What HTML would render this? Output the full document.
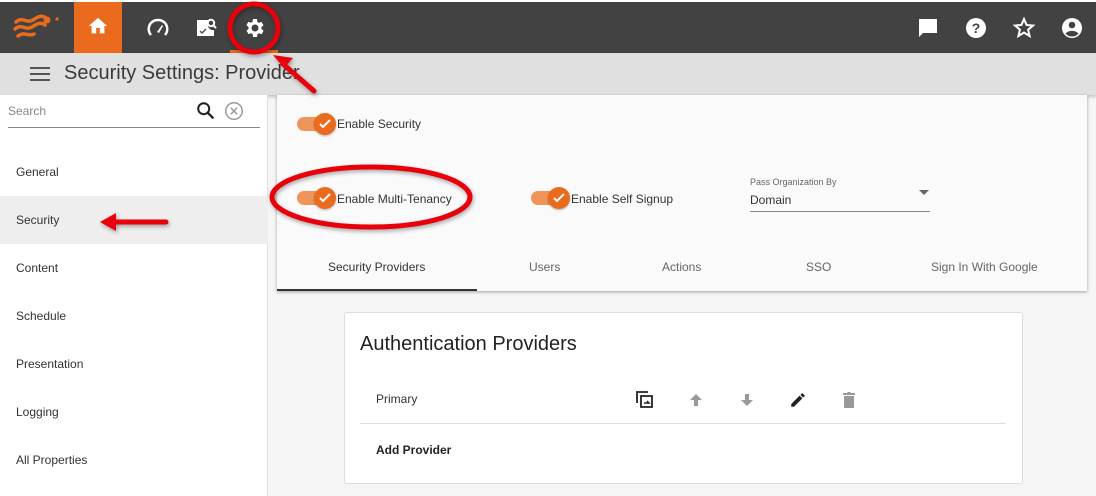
<!DOCTYPE html>
<html><head><style>
*{margin:0;padding:0;box-sizing:border-box}
body{width:1096px;height:496px;overflow:hidden;background:#f5f5f5;font-family:"Liberation Sans",sans-serif;position:relative;color:#333}
.a{position:absolute}
.top{left:0;top:0;width:1096px;height:53px;background:#424242;border-top:2px solid #fff}
.sub{left:0;top:53px;width:1096px;height:42px;background:#e0e0e0;box-shadow:0 2px 3px rgba(0,0,0,.2)}
.side{left:0;top:95px;width:268px;height:401px;background:#fff;border-right:1px solid #e0e0e0}
.nav{position:absolute;left:16px;font-size:12px;color:#333}
.card{left:277px;top:95px;width:810px;height:196px;background:#fafafa;box-shadow:0 1px 3px rgba(0,0,0,.35)}
.tog{position:absolute;width:36px;height:14px;border-radius:7px;background:#f0955a}
.tog:after{content:"";position:absolute;left:17px;top:-4px;width:22px;height:22px;border-radius:50%;background:#ea6a1e;box-shadow:0 1px 2px rgba(0,0,0,.3)}
.tog svg{position:absolute;left:21px;top:0;z-index:2}
.lbl{position:absolute;font-size:12px;color:#333}
.tab{position:absolute;top:260px;font-size:12px;color:#666}
.auth{left:344px;top:312px;width:679px;height:172px;background:#fff;border:1px solid #ddd;border-radius:3px}
</style></head><body>
<div class="a top"></div>
<svg class="a" style="left:12px;top:10px" width="50" height="32" viewBox="0 0 50 32"><g fill="none" stroke="#ea6a1e" stroke-width="3.5" stroke-linecap="round"><path d="M4 12c6-6 11 2 17-2s9-5 13-2"/><path d="M3 19c6-6 11 2 17-2s9-5 13-2"/><path d="M6 26c6-5 10 1 16-2"/></g><circle cx="45" cy="9" r="1.6" fill="#ea6a1e"/><circle cx="35" cy="10" r="3.5" fill="#ea6a1e"/></svg>
<div class="a" style="left:74px;top:2px;width:48px;height:51px;background:#ea6a1e"></div>
<svg class="a" style="left:87px;top:15px" width="22" height="22" viewBox="0 0 24 24"><path fill="#fff" d="M10 20v-6h4v6h5v-8h3L12 3 2 12h3v8z"/></svg>
<svg class="a" style="left:146px;top:16px" width="24" height="24" viewBox="0 0 24 24"><path fill="none" stroke="#fff" stroke-width="2.4" d="M5 19A9 9 0 0 1 12 4a9 9 0 0 1 7 15"/><path fill="#fff" d="M11 16l5-7 1 1-4 7z"/></svg>
<svg class="a" style="left:194px;top:15px" width="24" height="24" viewBox="0 0 24 24"><path fill="#fff" d="M3 5h11v4a5 5 0 0 0 6 6v6H3z"/><circle cx="17" cy="8" r="3.2" fill="none" stroke="#fff" stroke-width="2"/><path stroke="#fff" stroke-width="2" d="M19 10l3 3"/><path fill="none" stroke="#555" stroke-width="1.5" d="M6 16l2 2 4-4"/></svg>
<svg class="a" style="left:242px;top:16px" width="24" height="24" viewBox="0 0 24 24"><path fill="#fff" d="M19.4 13a7.5 7.5 0 0 0 0-2l2.1-1.6-2-3.5-2.5 1a7 7 0 0 0-1.7-1L15 3h-4l-.4 2.7a7 7 0 0 0-1.7 1l-2.5-1-2 3.5L6.6 11a7.5 7.5 0 0 0 0 2l-2.1 1.6 2 3.5 2.5-1a7 7 0 0 0 1.7 1L11 21h4l.4-2.7a7 7 0 0 0 1.7-1l2.5 1 2-3.5zM13 15.5a3.5 3.5 0 1 1 0-7 3.5 3.5 0 0 1 0 7z"/></svg>
<div class="a" style="left:230px;top:50px;width:48px;height:3px;background:#ea6a1e"></div>
<svg class="a" style="left:916px;top:16px" width="24" height="24" viewBox="0 0 24 24"><path fill="#fff" d="M3 3h18v14H7l-4 4z"/></svg>
<svg class="a" style="left:964px;top:16px" width="24" height="24" viewBox="0 0 24 24"><circle cx="12" cy="12" r="10" fill="#fff"/><text x="12" y="17" font-size="14" font-weight="bold" text-anchor="middle" fill="#424242" font-family="Liberation Sans">?</text></svg>
<svg class="a" style="left:1012px;top:16px" width="24" height="24" viewBox="0 0 24 24"><path fill="none" stroke="#fff" stroke-width="2" d="M12 3l2.6 6 6.4.5-4.9 4.2 1.5 6.3L12 16.6 6.4 20l1.5-6.3L3 9.5 9.4 9z"/></svg>
<svg class="a" style="left:1060px;top:16px" width="24" height="24" viewBox="0 0 24 24"><circle cx="12" cy="12" r="10" fill="#fff"/><circle cx="12" cy="9" r="3.3" fill="#424242"/><path fill="#424242" d="M5.5 17.5c3-3.5 10-3.5 13 0a8.5 8.5 0 0 1-13 0z"/></svg>
<div class="a sub"></div>
<svg class="a" style="left:30px;top:66px" width="20" height="16"><path stroke="#555" stroke-width="2" d="M0 2h20M0 8h20M0 14h20"/></svg>
<div class="a" style="left:64px;top:62px;font-size:20px;color:#3a3a3a">Security Settings: Provider</div>
<div class="a side"></div>
<div class="a" style="left:8px;top:104px;font-size:12px;color:#888">Search</div>
<svg class="a" style="left:195px;top:100px" width="22" height="22" viewBox="0 0 24 24"><circle cx="9.5" cy="9.5" r="6" fill="none" stroke="#222" stroke-width="2.2"/><path stroke="#222" stroke-width="2.5" d="M14 14l6 6"/></svg>
<svg class="a" style="left:223px;top:100px" width="22" height="22" viewBox="0 0 24 24"><circle cx="12" cy="12" r="9" fill="none" stroke="#999" stroke-width="1.6"/><path stroke="#999" stroke-width="1.6" d="M8.5 8.5l7 7M15.5 8.5l-7 7"/></svg>
<div class="a" style="left:8px;top:127px;width:252px;height:1px;background:#888"></div>
<div class="a" style="left:0;top:196px;width:268px;height:48px;background:#eee"></div>
<div class="nav" style="top:165px">General</div>
<div class="nav" style="top:213px">Security</div>
<div class="nav" style="top:261px">Content</div>
<div class="nav" style="top:309px">Schedule</div>
<div class="nav" style="top:357px">Presentation</div>
<div class="nav" style="top:405px">Logging</div>
<div class="nav" style="top:453px">All Properties</div>
<div class="a card"></div>
<div class="tog" style="left:297px;top:117px"><svg width="14" height="14" viewBox="0 0 14 14"><path fill="none" stroke="#fff" stroke-width="2" d="M2 7l3 3 7-7"/></svg></div>
<div class="lbl" style="left:337px;top:117px">Enable Security</div>
<div class="tog" style="left:297px;top:191px"><svg width="14" height="14" viewBox="0 0 14 14"><path fill="none" stroke="#fff" stroke-width="2" d="M2 7l3 3 7-7"/></svg></div>
<div class="lbl" style="left:337px;top:192px">Enable Multi-Tenancy</div>
<div class="tog" style="left:531px;top:191px"><svg width="14" height="14" viewBox="0 0 14 14"><path fill="none" stroke="#fff" stroke-width="2" d="M2 7l3 3 7-7"/></svg></div>
<div class="lbl" style="left:571px;top:192px">Enable Self Signup</div>
<div class="a" style="left:750px;top:177px;font-size:9px;color:#666">Pass Organization By</div>
<div class="a" style="left:750px;top:193px;font-size:12px;color:#333">Domain</div>
<div class="a" style="left:919px;top:190px;width:0;height:0;border-left:5px solid transparent;border-right:5px solid transparent;border-top:5px solid #666"></div>
<div class="a" style="left:750px;top:211px;width:180px;height:1px;background:#888"></div>
<div class="tab" style="left:328px;color:#333">Security Providers</div>
<div class="tab" style="left:529px">Users</div>
<div class="tab" style="left:662px">Actions</div>
<div class="tab" style="left:806px">SSO</div>
<div class="tab" style="left:931px">Sign In With Google</div>
<div class="a" style="left:277px;top:289px;width:200px;height:2px;background:#333"></div>
<div class="a auth"></div>
<div class="a" style="left:360px;top:333px;font-size:20px;color:#222">Authentication Providers</div>
<div class="a" style="left:376px;top:392px;font-size:12px;color:#333">Primary</div>
<svg class="a" style="left:635px;top:390px" width="20" height="20" viewBox="0 0 20 20"><path fill="none" stroke="#222" stroke-width="1.8" d="M2 13V2h11M6 6h11v11H6z"/><path fill="none" stroke="#222" stroke-width="1.5" d="M9 13h5l-2-2"/></svg>
<svg class="a" style="left:688px;top:392px" width="16" height="16" viewBox="0 0 16 16"><path fill="#999" d="M8 2l6 6h-4v6H6V8H2z"/></svg>
<svg class="a" style="left:739px;top:392px" width="16" height="16" viewBox="0 0 16 16"><path fill="#999" d="M8 14l6-6h-4V2H6v6H2z"/></svg>
<svg class="a" style="left:789px;top:391px" width="18" height="18" viewBox="0 0 24 24"><path fill="#222" d="M3 17.3V21h3.7L17.8 9.9l-3.7-3.7zM20.7 7a1 1 0 0 0 0-1.4l-2.3-2.3a1 1 0 0 0-1.4 0l-1.8 1.8 3.7 3.7z"/></svg>
<svg class="a" style="left:841px;top:391px" width="16" height="18" viewBox="0 0 16 18"><path fill="#999" d="M3 5h10v12H3zM2 2h4l1-1h2l1 1h4v2H2z"/></svg>
<div class="a" style="left:360px;top:423px;width:646px;height:1px;background:#ddd"></div>
<div class="a" style="left:376px;top:443px;font-size:12px;font-weight:bold;color:#222">Add Provider</div>
<svg class="a" style="left:0;top:0;filter:drop-shadow(1px 2px 2px rgba(0,0,0,.35))" width="1096" height="496">
<g fill="none" stroke="#e8000a" stroke-width="5">
<ellipse cx="254" cy="28" rx="24" ry="24"/>
<ellipse cx="371" cy="197" rx="99" ry="30"/>
<path stroke-linecap="round" d="M314 91L283 64"/>
<path stroke-linecap="round" d="M166 222H110"/>
</g>
<path fill="#e8000a" d="M273 55l20 3-9 10z"/>
<path fill="#e8000a" d="M100 222l16-9v18z"/>
</svg>
</body></html>
